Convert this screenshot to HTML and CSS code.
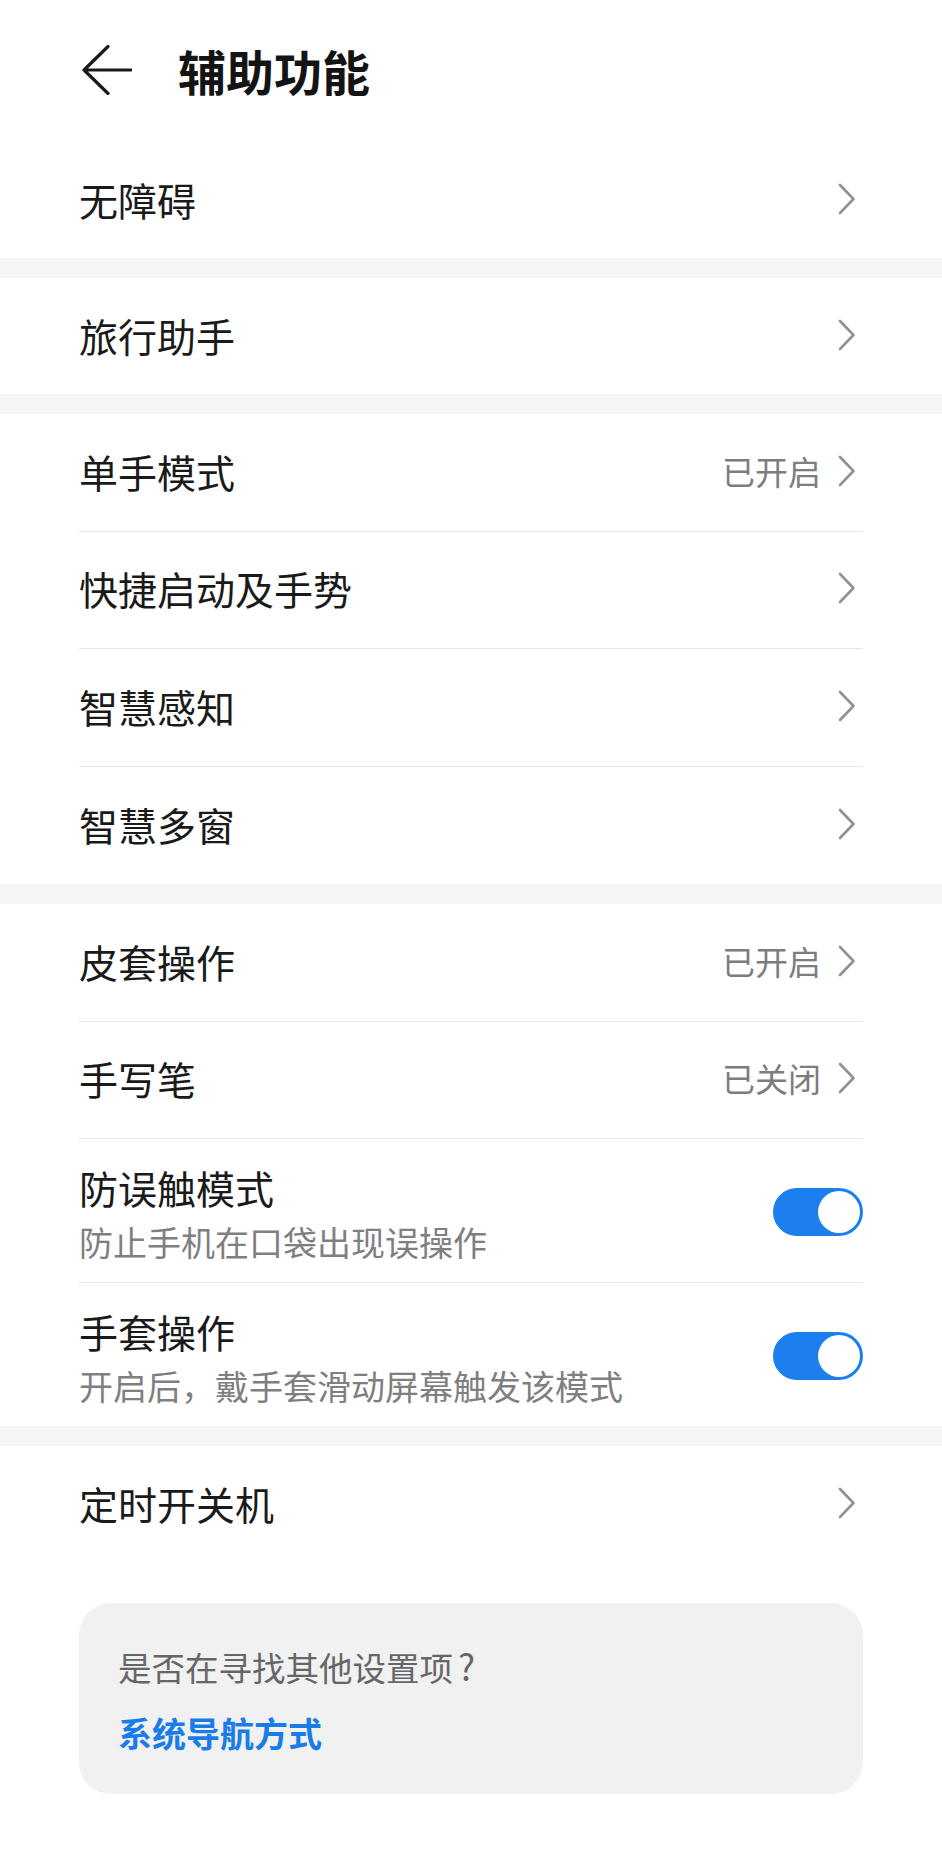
FILE: index.html
```html
<!DOCTYPE html>
<html lang="zh-CN">
<head>
<meta charset="utf-8">
<title>辅助功能</title>
<link rel="stylesheet" href="styles.css">
</head>
<body>
<div class="page">
  <header class="header">
    <svg class="back" width="50" height="50" viewBox="0 0 50 50" aria-hidden="true">
      <path d="M2 25 H49 M26 1.5 L2 25 L26 48.5" fill="none" stroke="#1a1a1a" stroke-width="3.2" stroke-linecap="round" stroke-linejoin="round"/>
    </svg>
    <h1 class="title">辅助功能</h1>
  </header>

  <section class="group short">
    <div class="row"><div class="row-inner"><span class="label">无障碍</span><span class="right"><svg class="chev" width="18" height="32" viewBox="0 0 18 32"><path d="M2 2 L15.5 16 L2 30" fill="none" stroke="#919191" stroke-width="2.6" stroke-linecap="round" stroke-linejoin="round"/></svg></span></div></div>
  </section>
  <div class="band"></div>

  <section class="group short">
    <div class="row"><div class="row-inner"><span class="label">旅行助手</span><span class="right"><svg class="chev" width="18" height="32" viewBox="0 0 18 32"><path d="M2 2 L15.5 16 L2 30" fill="none" stroke="#919191" stroke-width="2.6" stroke-linecap="round" stroke-linejoin="round"/></svg></span></div></div>
  </section>
  <div class="band"></div>

  <section class="group">
    <div class="row"><div class="row-inner divided"><span class="label">单手模式</span><span class="right"><span class="value">已开启</span><svg class="chev" width="18" height="32" viewBox="0 0 18 32"><path d="M2 2 L15.5 16 L2 30" fill="none" stroke="#919191" stroke-width="2.6" stroke-linecap="round" stroke-linejoin="round"/></svg></span></div></div>
    <div class="row"><div class="row-inner divided"><span class="label">快捷启动及手势</span><span class="right"><svg class="chev" width="18" height="32" viewBox="0 0 18 32"><path d="M2 2 L15.5 16 L2 30" fill="none" stroke="#919191" stroke-width="2.6" stroke-linecap="round" stroke-linejoin="round"/></svg></span></div></div>
    <div class="row"><div class="row-inner divided"><span class="label">智慧感知</span><span class="right"><svg class="chev" width="18" height="32" viewBox="0 0 18 32"><path d="M2 2 L15.5 16 L2 30" fill="none" stroke="#919191" stroke-width="2.6" stroke-linecap="round" stroke-linejoin="round"/></svg></span></div></div>
    <div class="row"><div class="row-inner"><span class="label">智慧多窗</span><span class="right"><svg class="chev" width="18" height="32" viewBox="0 0 18 32"><path d="M2 2 L15.5 16 L2 30" fill="none" stroke="#919191" stroke-width="2.6" stroke-linecap="round" stroke-linejoin="round"/></svg></span></div></div>
  </section>
  <div class="band"></div>

  <section class="group">
    <div class="row"><div class="row-inner divided"><span class="label">皮套操作</span><span class="right"><span class="value">已开启</span><svg class="chev" width="18" height="32" viewBox="0 0 18 32"><path d="M2 2 L15.5 16 L2 30" fill="none" stroke="#919191" stroke-width="2.6" stroke-linecap="round" stroke-linejoin="round"/></svg></span></div></div>
    <div class="row"><div class="row-inner divided"><span class="label">手写笔</span><span class="right"><span class="value">已关闭</span><svg class="chev" width="18" height="32" viewBox="0 0 18 32"><path d="M2 2 L15.5 16 L2 30" fill="none" stroke="#919191" stroke-width="2.6" stroke-linecap="round" stroke-linejoin="round"/></svg></span></div></div>
    <div class="row"><div class="row-inner two divided">
      <div class="texts"><span class="label">防误触模式</span><span class="sub">防止手机在口袋出现误操作</span></div>
      <span class="toggle"><span class="knob"></span></span>
    </div></div>
    <div class="row"><div class="row-inner two last">
      <div class="texts"><span class="label">手套操作</span><span class="sub">开启后，戴手套滑动屏幕触发该模式</span></div>
      <span class="toggle"><span class="knob"></span></span>
    </div></div>
  </section>
  <div class="band"></div>

  <section class="group">
    <div class="row"><div class="row-inner end"><span class="label">定时开关机</span><span class="right"><svg class="chev" width="18" height="32" viewBox="0 0 18 32"><path d="M2 2 L15.5 16 L2 30" fill="none" stroke="#919191" stroke-width="2.6" stroke-linecap="round" stroke-linejoin="round"/></svg></span></div></div>
  </section>

  <div class="card">
    <p class="card-q">是否在寻找其他设置项<span class="q">?</span></p>
    <a class="card-link">系统导航方式</a>
  </div>
</div>
</body>
</html>
```

FILE: styles.css
```css
* { box-sizing: border-box; }
html, body { margin: 0; padding: 0; background: #ffffff; }
body {
  font-family: "Noto Sans CJK SC", "Noto Sans", sans-serif;
  color: #1a1a1a;
}
.page { width: 942px; min-height: 1855px; padding-bottom: 60px; }

.header {
  height: 142px;
  display: flex;
  align-items: center;
  padding-left: 82px;
  padding-bottom: 2px;
}
.back { display: block; flex: none; }
.title {
  margin: 0 0 0 46px;
  font-size: 48px;
  line-height: 60px;
  font-weight: 700;
  color: #141414;
}

.band { height: 20px; background: #f5f5f5; }

.row { padding: 0 79px; }
.row-inner {
  height: 117.5px;
  display: flex;
  align-items: center;
  justify-content: space-between;
  padding-bottom: 3px;
}
.short .row-inner { height: 116px; }
.row-inner.end { height: 117px; }
.row-inner.divided { border-bottom: 1px solid #e6e6e6; }
.row-inner.two { height: 144px; padding-bottom: 0; }
.row-inner.two.last { height: 143px; }

.label { font-size: 39px; line-height: 48px; color: #1a1a1a; }
.right { display: flex; align-items: center; }
.value { font-size: 33px; line-height: 44px; color: #7d7d7d; margin-right: 17px; }
.chev { display: block; margin-right: 7px; }

.texts { display: flex; flex-direction: column; padding: 24px 0 18px; }
.sub { font-size: 34px; line-height: 46px; margin-top: 8px; color: #7f7f7f; }

.toggle {
  width: 90px;
  height: 48px;
  border-radius: 24px;
  background: #1b7ff0;
  display: flex;
  align-items: center;
  justify-content: flex-end;
  padding-right: 3px;
  margin-top: 2px;
  flex: none;
}
.knob { width: 42px; height: 42px; border-radius: 50%; background: #ffffff; }

.card {
  margin: 40px 79px 0;
  height: 191px;
  border-radius: 32px;
  background: #f1f1f1;
  padding: 39px 39px 0;
  display: flex;
  flex-direction: column;
}
.card-q { margin: 0; font-size: 33.5px; line-height: 46px; color: #666666; }
.q { padding-left: 5px; font-size: 36px; }
.card-link { margin-top: 20px; font-size: 34px; line-height: 46px; font-weight: 700; color: #1a7ce8; }
```
